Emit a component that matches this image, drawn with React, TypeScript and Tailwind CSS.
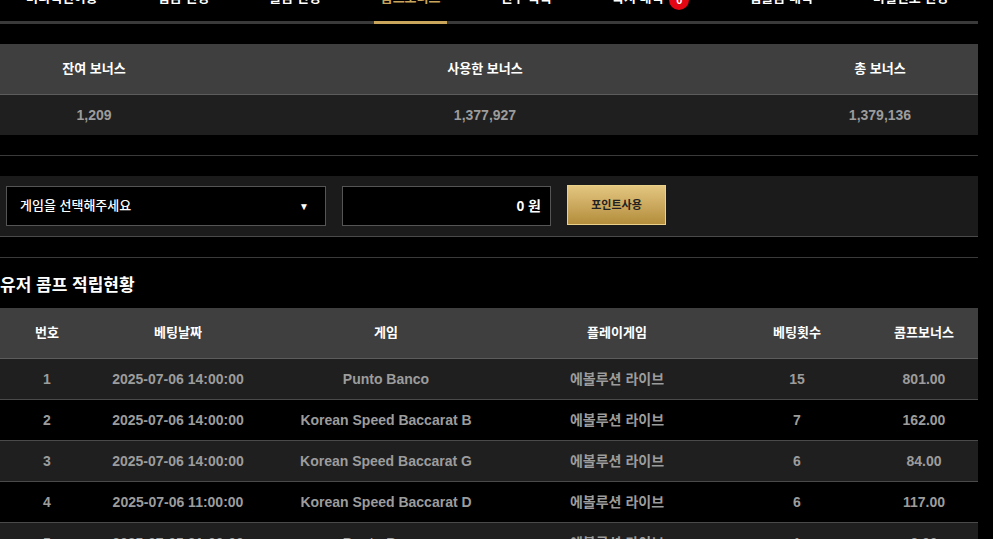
const tabs = [
  { label: '머니백전이동' },
  { label: '입금 신청' },
  { label: '출금 신청' },
  { label: '콤프보너스', active: true },
  { label: '친구 목록' },
  { label: '쪽지 내역', badge: 0 },
  { label: '입출금 내역' },
  { label: '비밀번호 변경' },
]

const rows = [
  { no: 1, date: '2025-07-06 14:00:00', game: 'Punto Banco', play: '에볼루션 라이브', count: 15, bonus: '801.00' },
  { no: 2, date: '2025-07-06 14:00:00', game: 'Korean Speed Baccarat B', play: '에볼루션 라이브', count: 7, bonus: '162.00' },
  { no: 3, date: '2025-07-06 14:00:00', game: 'Korean Speed Baccarat G', play: '에볼루션 라이브', count: 6, bonus: '84.00' },
  { no: 4, date: '2025-07-06 11:00:00', game: 'Korean Speed Baccarat D', play: '에볼루션 라이브', count: 6, bonus: '117.00' },
  { no: 5, date: '2025-07-05 21:00:00', game: 'Punto Banco', play: '에볼루션 라이브', count: 1, bonus: '3.00' },
]

const cols = 'grid grid-cols-[94px_168px_248px_214px_146px_1fr]'

export default function App() {
  return (
    <div
      className="h-[539px] w-full overflow-hidden bg-black"
      style={{ fontFamily: '"Liberation Sans", "Noto Sans CJK KR", sans-serif' }}
    >
      <div className="w-[978px]">
        {/* Tabs */}
        <div className="mt-[-12px] flex h-[36px] gap-[46px] border-b-[3px] border-[#3a3a3a] pl-[19px]">
          {tabs.map((t) => (
            <div
              key={t.label}
              className={
                t.active
                  ? 'mb-[-3px] flex h-[36px] items-start border-b-[3px] border-[#c9a55c] px-[7px] text-[13px] font-bold leading-[20px] text-[#c9a55c]'
                  : 'mb-[-3px] flex h-[36px] items-start border-b-[3px] border-transparent px-[7px] text-[13px] font-bold leading-[20px] text-white'
              }
            >
              {t.label}
              {t.badge !== undefined && (
                <span className="relative top-[2px] ml-[6px] flex h-[20px] w-[20px] items-center justify-center rounded-full bg-[#e30613] text-[11px] font-bold text-white">
                  {t.badge}
                </span>
              )}
            </div>
          ))}
        </div>

        {/* Bonus summary */}
        <div className="mt-[20px]">
          <div className="grid h-[51px] grid-cols-[188px_1fr_196px] items-center border-b border-[#5c5c5c] bg-[#3f3f3f] text-center text-[13px] font-bold text-white">
            <div>잔여 보너스</div>
            <div>사용한 보너스</div>
            <div>총 보너스</div>
          </div>
          <div className="grid h-[40px] grid-cols-[188px_1fr_196px] items-center bg-[#1f1f1f] text-center text-[14px] font-bold text-[#9c9c9c]">
            <div>1,209</div>
            <div>1,377,927</div>
            <div>1,379,136</div>
          </div>
        </div>

        <div className="mt-[20px] h-px bg-[#3a3a3a]" />

        {/* Point use form */}
        <div className="mt-[20px] flex h-[61px] items-center gap-[16px] border-b border-[#4a4a4a] bg-[#1b1b1b] pl-[6px]">
          <div className="flex h-[40px] w-[320px] items-center justify-between border border-[#555] bg-black pl-[13px] pr-[16px] text-[13px] font-medium text-white">
            <span>게임을 선택해주세요</span>
            <span className="text-[10px]">▼</span>
          </div>
          <div className="flex h-[40px] w-[209px] items-center justify-end border border-[#555] bg-black pr-[9px] text-[14px] font-bold text-white">
            0 원
          </div>
          <button className="mt-[-2px] h-[40px] w-[99px] border border-[#ead189] bg-gradient-to-b from-[#e4c680] to-[#b38d3b] text-[11px] font-bold text-[#222]">
            포인트사용
          </button>
        </div>

        <div className="mt-[20px] h-px bg-[#3a3a3a]" />

        <div className="flex h-[50px] items-center pt-[6px] text-[17px] font-bold text-white">
          유저 콤프 적립현황
        </div>

        {/* Comp table */}
        <div className={`${cols} h-[51px] items-center border-b border-[#5c5c5c] bg-[#3f3f3f] text-center text-[13px] font-bold text-white`}>
          <div>번호</div>
          <div>베팅날짜</div>
          <div>게임</div>
          <div>플레이게임</div>
          <div>베팅횟수</div>
          <div>콤프보너스</div>
        </div>
        {rows.map((r, i) => (
          <div
            key={r.no}
            className={`${cols} h-[41px] items-center border-b border-[#4a4a4a] text-center text-[14px] font-bold text-[#9c9c9c] ${
              i % 2 === 0 ? 'bg-[#1f1f1f]' : 'bg-black'
            }`}
          >
            <div>{r.no}</div>
            <div>{r.date}</div>
            <div>{r.game}</div>
            <div>{r.play}</div>
            <div>{r.count}</div>
            <div>{r.bonus}</div>
          </div>
        ))}
      </div>
    </div>
  )
}
